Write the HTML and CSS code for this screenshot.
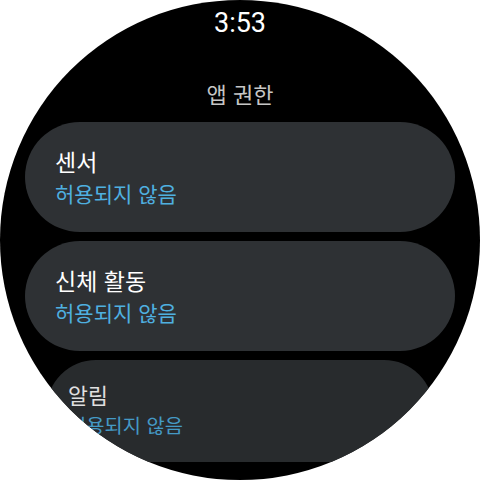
FILE: index.html
```html
<!DOCTYPE html>
<html lang="ko">
<head>
<meta charset="utf-8">
<link rel="stylesheet" href="styles.css">
</head>
<body>
<div class="watch">
  <div class="time">3:53</div>
  <div class="heading">앱 권한</div>
  <div class="list">
    <div class="chip">
      <div class="chip-title">센서</div>
      <div class="chip-sub">허용되지 않음</div>
    </div>
    <div class="chip">
      <div class="chip-title">신체 활동</div>
      <div class="chip-sub">허용되지 않음</div>
    </div>
    <div class="chip chip-edge">
      <div class="chip-title">알림</div>
      <div class="chip-sub">허용되지 않음</div>
    </div>
  </div>
</div>
</body>
</html>
```
FILE: styles.css
```css
html, body {
  margin: 0;
  padding: 0;
  background: #ffffff;
}
.watch {
  width: 480px;
  height: 480px;
  border-radius: 50%;
  background: #000000;
  overflow: hidden;
  display: flex;
  flex-direction: column;
  align-items: center;
  font-family: "Noto Sans CJK KR", "Noto Sans", sans-serif;
}
.time {
  height: 47px;
  line-height: 47px;
  font-family: Roboto, "Noto Sans", sans-serif;
  font-size: 27px;
  color: #ffffff;
}
.heading {
  margin-top: 26px;
  height: 40px;
  line-height: 40px;
  font-size: 22px;
  color: #c6c6c6;
}
.list {
  margin-top: 9px;
  width: 430px;
  height: 340px;
  overflow: hidden;
  display: flex;
  flex-direction: column;
  gap: 9px;
}
.chip {
  flex: none;
  box-sizing: border-box;
  height: 110px;
  padding: 23px 30px;
  border-radius: 55px;
  background: #2e3134;
}
.chip-title {
  line-height: 32px;
  font-size: 23px;
  color: #ffffff;
}
.chip-sub {
  line-height: 32px;
  font-size: 21px;
  color: #4fb0e0;
}
.chip-edge {
  height: 180px;
  padding: 23px 24px;
  transform: scale(0.9);
  transform-origin: top center;
  opacity: 0.88;
}
.chip-edge .chip-title {
  font-size: 24px;
}
.chip-edge .chip-sub {
  font-size: 22px;
}
```
